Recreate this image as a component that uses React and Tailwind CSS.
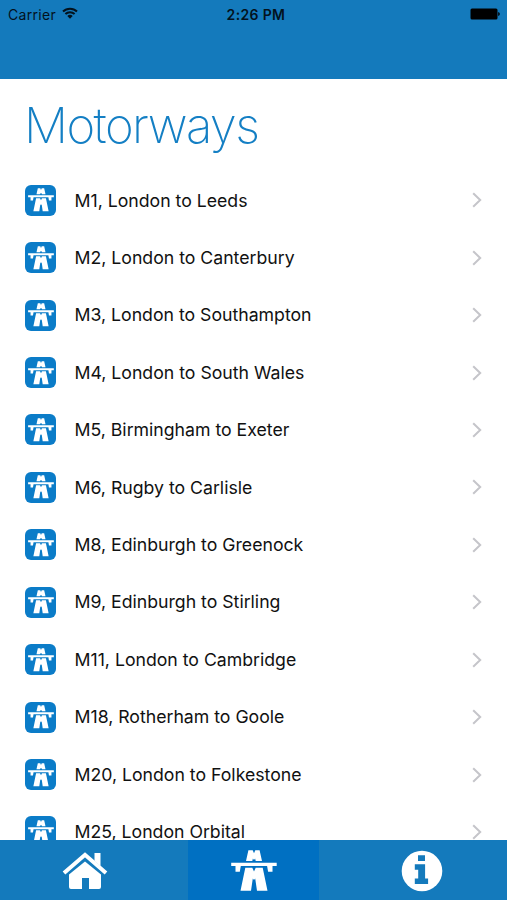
const routes = [
  'M1, London to Leeds',
  'M2, London to Canterbury',
  'M3, London to Southampton',
  'M4, London to South Wales',
  'M5, Birmingham to Exeter',
  'M6, Rugby to Carlisle',
  'M8, Edinburgh to Greenock',
  'M9, Edinburgh to Stirling',
  'M11, London to Cambridge',
  'M18, Rotherham to Goole',
  'M20, London to Folkestone',
  'M25, London Orbital',
];

function MotorwayIcon({ className }) {
  return (
    <svg viewBox="0 0 46 42" preserveAspectRatio="none" className={className} fill="currentColor">
      <path d="M17.4 0.3h4.3l1.3 3 1.300-3h4.300l2.400 10.800h-6.300l-.6-2.500-1.100 1.500-1.100-1.500-.6 2.500h-6.300z" />
      <path d="M0.200 12.800h45.500v3.300h-4.200v5.700h-4.400l-1-5.700H9.800l-1 5.700H4.500v-5.700H0.200z" />
      <path d="M14.300 17.800h7l1.700 3.800 1.700-3.800h7l4.800 23h-10.500L24.200 28.500l-1.200 1.500-1.200-1.500-1.800 12.300H9.500z" />
    </svg>
  );
}

function StatusBar() {
  return (
    <div className="grid h-7 grid-cols-3 items-center pl-2 pr-[7px] text-[14px] text-[#03121d]">
      <div className="flex items-center gap-[6px] tracking-[0.3px]">
        <span>Carrier</span>
        <svg viewBox="0 0 16 12" className="mt-[-2px] h-3 w-4" fill="none" stroke="currentColor" strokeWidth="2">
          <path d="M1 4.500a10 10 0 0 1 14 0M3.400 7a6.600 6.600 0 0 1 9.200 0" />
          <path d="M5.300 8.900a4 4 0 0 1 5.400 0L8 11.700z" fill="currentColor" stroke="none" />
        </svg>
      </div>
      <span className="pl-[4px] text-center text-[14px] font-semibold tracking-[0.35px]">2:26 PM</span>
      <svg viewBox="0 0 30 12" className="h-3 w-[30px] justify-self-end" fill="#000">
        <rect x="0.5" y="0.5" width="27" height="11" rx="1.5" />
        <path d="M28.200 4q1.600.3 1.600 2t-1.600 2z" />
      </svg>
    </div>
  );
}

function RouteRow({ name }) {
  return (
    <li className="flex h-[57.43px] shrink-0 items-center pl-[25px] pr-[25px]">
      <span className="flex h-[31px] w-[31px] items-center justify-center rounded-[6px] bg-[#0b7cc8] text-white">
        <MotorwayIcon className="h-[24px] w-[26px]" />
      </span>
      <span className="ml-[18.5px] flex-1 whitespace-nowrap pt-px text-[17.68px] text-[#111]">{name}</span>
      <svg viewBox="0 0 10 16" className="h-4 w-[10px]" fill="none" stroke="#c5c5ca" strokeWidth="2">
        <path d="M1.200 1.200 8.200 8l-7 6.800" />
      </svg>
    </li>
  );
}

export default function App() {
  return (
    <div className="flex h-[900px] w-[507px] flex-col overflow-hidden bg-white font-['Inter','Liberation_Sans',sans-serif]">
      <header className="h-[79px] shrink-0 bg-[#147abc]">
        <StatusBar />
      </header>
      <main className="flex min-h-0 flex-1 flex-col overflow-hidden">
        <h1 className="h-[92.6px] shrink-0 pl-[24px] pt-[17px] text-[49px] font-extralight leading-[60px] tracking-[-1.55px] text-[#147fc4]">
          Motorways
        </h1>
        <ul className="flex flex-col">
          {routes.map((name) => (
            <RouteRow key={name} name={name} />
          ))}
        </ul>
      </main>
      <nav className="flex h-[60px] shrink-0 bg-[#147abc] text-white">
        <div className="flex w-[188px] justify-center">
          <svg viewBox="0 0 46 38" className="ml-[-18px] mt-[12px] h-[38px] w-[46px]" fill="currentColor">
            <path d="M7 22.500 23 9.500l16 13V35a2 2 0 0 1-2 2H27V26h-7v11H9a2 2 0 0 1-2-2z" />
            <path d="M32.500 1h6v13l-6-5z" />
            <path d="M2 21 23 2.800 44 21" fill="none" stroke="currentColor" strokeWidth="4" />
          </svg>
        </div>
        <div className="flex w-[131px] justify-center bg-[#0070c2]">
          <MotorwayIcon className="mt-[10px] h-[42px] w-[46px]" />
        </div>
        <div className="flex flex-1 justify-center">
          <svg viewBox="0 0 42 42" className="ml-[18px] mt-[10px] h-[42px] w-[42px]">
            <circle cx="21" cy="21" r="20.300" fill="currentColor" />
            <path d="M17 5.300h7v5.700h-7zM13.800 14.300h10.300v14.200h3v5.500H13.800v-5.500h3.400v-8.800h-3.400z" fill="#147abc" />
          </svg>
        </div>
      </nav>
    </div>
  );
}
